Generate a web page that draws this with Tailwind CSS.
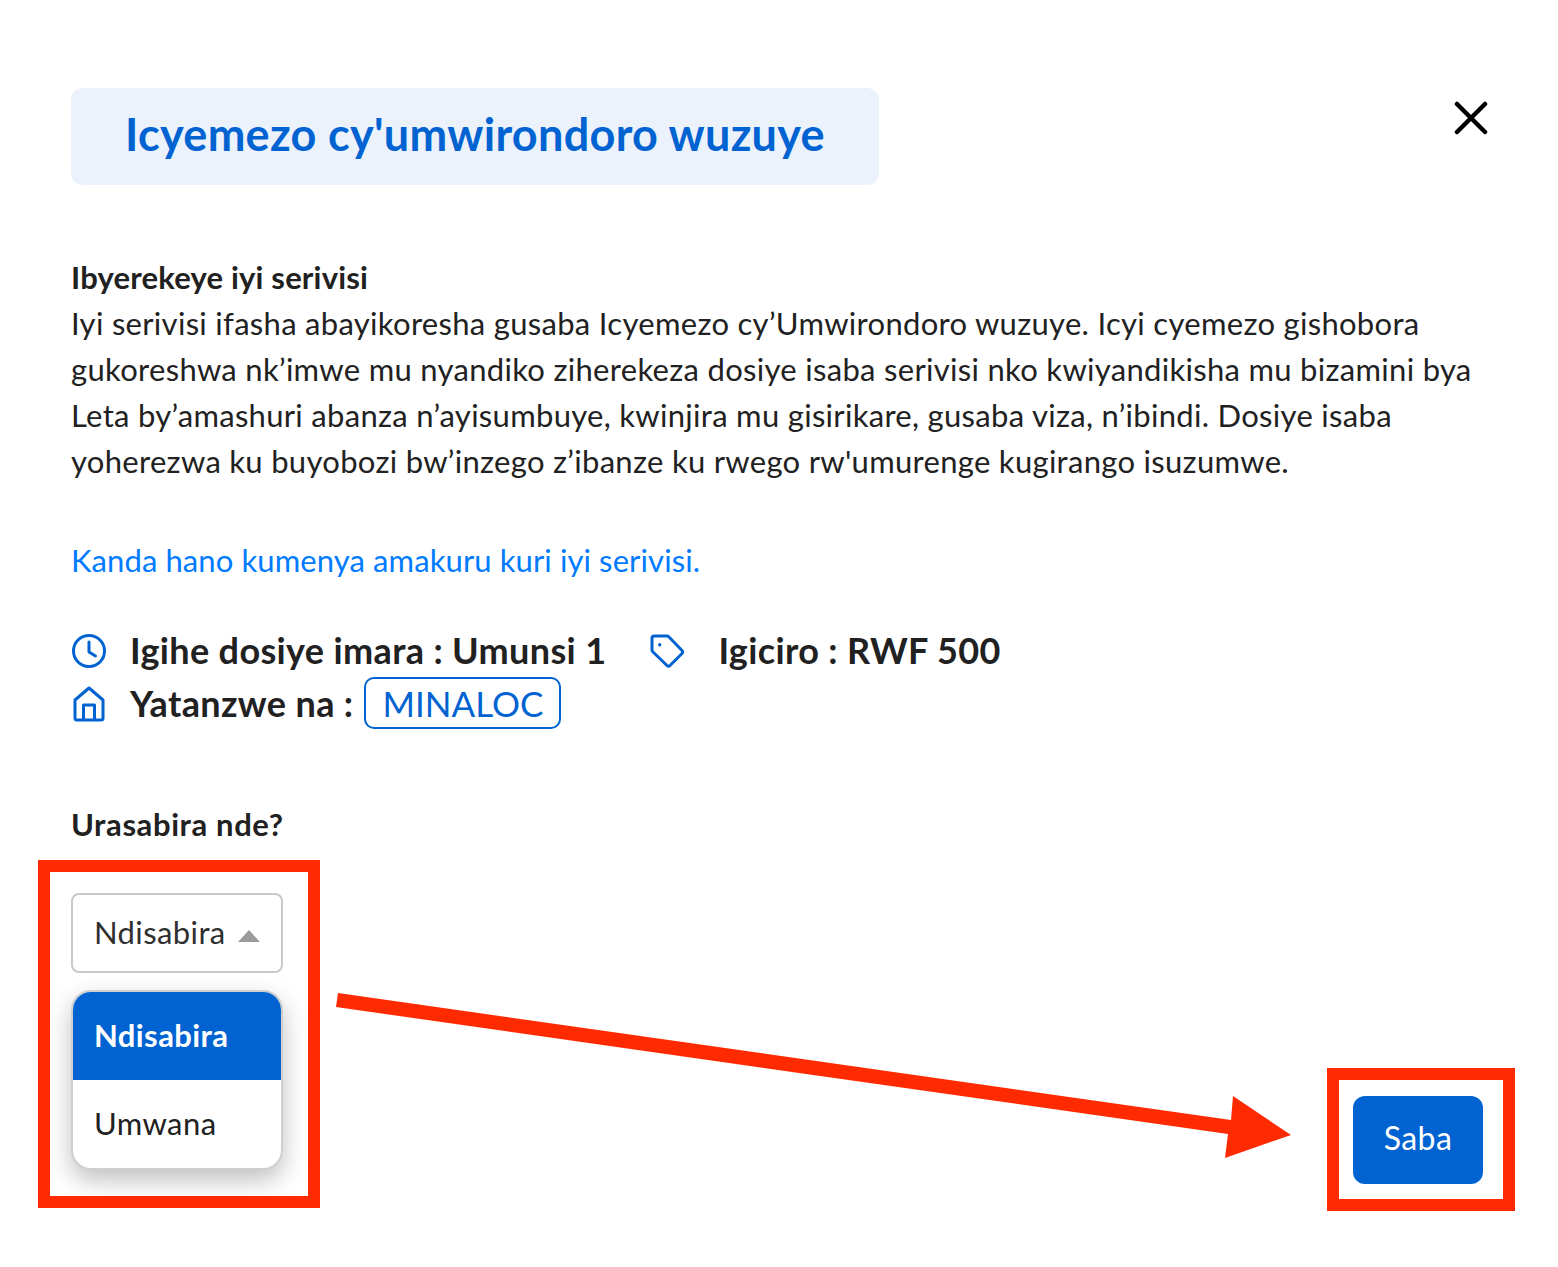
<!DOCTYPE html>
<html lang="rw">
<head>
    <meta charset="UTF-8">
    <title>Icyemezo cy'umwirondoro wuzuye</title>
    <script src="https://cdn.jsdelivr.net/npm/@tailwindcss/browser@4"></script>
</head>
<body class="bg-white font-['Lato',sans-serif] text-[#212121]">
    <div class="relative w-[1558px] h-[1267px] pl-[71px] pr-[71px] pt-[88px] overflow-hidden">
        <div class="flex justify-between items-start">
            <h1 class="w-[808px] h-[97px] pb-[3px] flex items-center justify-center rounded-xl bg-[#ebf2fc] text-[#0063d1] text-[45px] tracking-[0.3px] font-bold">Icyemezo cy'umwirondoro wuzuye</h1>
            <svg class="mt-[13px] mr-[-1px]" width="34" height="34" viewBox="0 0 34 34" fill="none" stroke="black" stroke-width="4.500" stroke-linecap="round"><path d="M3 3 L31 31 M31 3 L3 31"/></svg>
        </div>

        <section class="mt-[69px] text-[31px] leading-[46px]">
            <h2 class="font-bold tracking-[0.18px]">Ibyerekeye iyi serivisi</h2>
            <p class="tracking-[0.3px]">Iyi serivisi ifasha abayikoresha gusaba Icyemezo cy’Umwirondoro wuzuye. Icyi cyemezo gishobora gukoreshwa nk’imwe mu nyandiko ziherekeza dosiye isaba serivisi nko kwiyandikisha mu bizamini bya Leta by’amashuri abanza n’ayisumbuye, kwinjira mu gisirikare, gusaba viza, n’ibindi. Dosiye isaba yoherezwa ku buyobozi bw’inzego z’ibanze ku rwego rw'umurenge kugirango isuzumwe.</p>
            <a href="#" class="block mt-[53px] text-[#007bff] tracking-[0.1px]">Kanda hano kumenya amakuru kuri iyi serivisi.</a>
        </section>

        <div class="mt-[40px] text-[36px] tracking-[0.35px] font-bold">
            <div class="flex items-center h-[53px]">
                <svg class="mt-[3px]" width="36" height="36" viewBox="0 0 36 36" fill="none" stroke="#0063d1" stroke-width="3" stroke-linecap="round" stroke-linejoin="round"><circle cx="18" cy="18" r="15.500"/><path d="M18 9 V19 L24.500 23"/></svg>
                <span class="ml-[23px]">Igihe dosiye imara : Umunsi 1</span>
                <svg class="ml-[43px] mt-[2px]" width="38" height="38" viewBox="0 0 38 38" fill="none" stroke="#0063d1" stroke-width="3" stroke-linejoin="round"><path d="M5 4 H18 Q19 4 20 5 L33 18.500 Q34.500 20 33 21.500 L21 33.500 Q19.500 35 18 33.500 L4 20 Q3 19 3 18 V6 Q3 4 5 4 Z"/><circle cx="10.700" cy="12.700" r="1.700" fill="#0063d1" stroke="none"/></svg>
                <span class="ml-[31px]">Igiciro : RWF 500</span>
            </div>
            <div class="flex items-center h-[53px]">
                <svg class="ml-[2px] mt-[2px]" width="32" height="36" viewBox="0 0 32 36" fill="none" stroke="#0063d1" stroke-width="3" stroke-linejoin="round"><path d="M2 14 L16 2 L30 14 V32 Q30 34 28 34 H4 Q2 34 2 32 Z"/><path d="M10.500 34 V19 H21.500 V34"/></svg>
                <span class="ml-[25px]">Yatanzwe na :</span>
                <span class="ml-[11px] mt-[1px] h-[52px] w-[197px] flex items-center justify-center rounded-[10px] border-2 border-[#0063d1] text-[#0063d1] text-[35px] tracking-normal font-normal">MINALOC</span>
            </div>
        </div>

        <h2 class="mt-[72px] text-[31px] tracking-[0.6px] leading-[46px] font-bold">Urasabira nde?</h2>

        <div class="mt-[46px] w-[212px] text-[31px] tracking-[0.4px]">
            <div class="h-[80px] pb-[2px] flex items-center pl-[21px] rounded-lg border-2 border-[#c9c9c9] text-[#2f2f2f]">
                Ndisabira
                <span class="ml-[12px] mt-[8px] w-0 h-0 border-x-[11px] border-x-transparent border-b-[12px] border-b-[#9b9b9b]"></span>
            </div>
            <ul class="mt-[17px] h-[180px] rounded-[20px] border-2 border-[#cfcfcf] overflow-hidden bg-white shadow-[0_10px_24px_rgba(0,0,0,0.25)]">
                <li class="h-[88px] pb-[2px] flex items-center pl-[21px] bg-[#0063d1] text-white font-bold">Ndisabira</li>
                <li class="h-[88px] pb-[2px] flex items-center pl-[21px]">Umwana</li>
            </ul>
        </div>

        <button class="absolute left-[1353px] top-[1096px] w-[130px] h-[88px] pb-[4px] rounded-xl bg-[#0063d1] text-white text-[32px] tracking-[0.4px]">Saba</button>

        <!-- annotation layer -->
        <div class="absolute left-[38px] top-[860px] w-[282px] h-[348px] border-[12.500px] border-[#ff2a00]"></div>
        <div class="absolute left-[1327px] top-[1068px] w-[188px] h-[143px] border-[12.500px] border-[#ff2a00]"></div>
        <svg class="absolute left-0 top-0" width="1558" height="1267" viewBox="0 0 1558 1267" fill="#ff2a00"><path d="M338 993 L1231 1120 L1233 1096 L1291 1135 L1225 1158 L1228 1134 L336 1007 Z"/></svg>
    </div>
</body>
</html>
